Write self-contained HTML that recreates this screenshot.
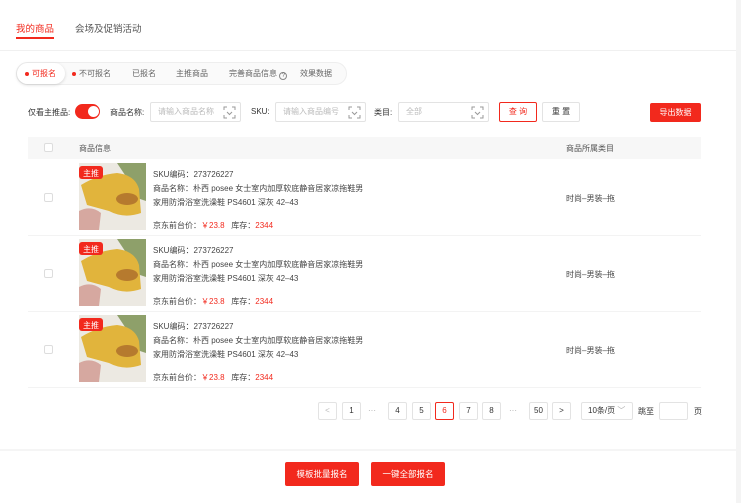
<!DOCTYPE html>
<html><head><meta charset="utf-8"><style>
*{margin:0;padding:0;box-sizing:border-box}
body{width:741px;height:503px;background:#fff;font-family:"Liberation Sans","Noto Sans CJK SC",sans-serif;font-size:8px;color:#333;position:relative;overflow:hidden}
.a{position:absolute;white-space:nowrap}
.inp{position:absolute;height:20px;border:1px solid #e3e3e3;border-radius:2px;color:#bbb;font-size:8px;line-height:18px;padding-left:7px}
.sc{position:absolute;right:4px;top:3px}
.pg{position:absolute;top:402px;width:19px;height:18px;border:1px solid #e3e3e3;border-radius:2px;text-align:center;line-height:16px;font-size:8px;color:#333}
.cb{position:absolute;width:9px;height:9px;border:1px solid #ddd;border-radius:2px;background:#fff}
.btn{position:absolute;background:#f2291d;color:#fff;border-radius:2px;text-align:center}
.red{color:#f2291d}
</style></head><body>
<div class="a" style="left:16px;top:21px;font-size:9.5px;color:#f2291d">我的商品</div>
<div style="position:absolute;left:16px;top:37px;width:38px;height:2px;background:#f2291d"></div>
<div class="a" style="left:75px;top:21px;font-size:9.5px;color:#555">会场及促销活动</div>
<div style="position:absolute;left:0;top:50px;width:736px;height:1px;background:#f0f0f0"></div>

<div style="position:absolute;left:16px;top:62px;width:331px;height:23px;border:1px solid #eee;border-radius:12px;background:#fafafa"></div>
<div style="position:absolute;left:17px;top:63px;width:48px;height:21px;border-radius:11px;background:#fff;box-shadow:0 1px 3px rgba(0,0,0,.15)"></div>
<div style="position:absolute;left:25px;top:72px;width:4px;height:4px;border-radius:50%;background:#f2291d"></div>
<div class="a red" style="left:32px;top:68px">可报名</div>
<div style="position:absolute;left:72px;top:72px;width:4px;height:4px;border-radius:50%;background:#f2291d"></div>
<div class="a" style="left:79px;top:68px;color:#666">不可报名</div>
<div class="a" style="left:132px;top:68px;color:#666">已报名</div>
<div class="a" style="left:176px;top:68px;color:#666">主推商品</div>
<div class="a" style="left:229px;top:68px;color:#666">完善商品信息 <span style="display:inline-block;width:8px;height:8px;border:1px solid #888;border-radius:50%;font-size:6px;line-height:6px;text-align:center;vertical-align:-1px">?</span></div>
<div class="a" style="left:300px;top:68px;color:#666">效果数据</div>

<div class="a" style="left:28px;top:107px;color:#333">仅看主推品:</div>
<div style="position:absolute;left:75px;top:104px;width:25px;height:15px;border-radius:8px;background:#f2291d"></div>
<div style="position:absolute;left:88px;top:106px;width:11px;height:11px;border-radius:50%;background:#fff"></div>
<div class="a" style="left:110px;top:107px">商品名称:</div>
<div class="inp" style="left:150px;top:102px;width:91px">请输入商品名称<svg class="sc" width="13" height="13" viewBox="0 0 13 13" fill="none" stroke="#999" stroke-width="1"><path d="M1 4V1H4M9 1H12V4M12 9V12H9M4 12H1V9M4 6L6.5 8.5L9 6"/></svg></div>
<div class="a" style="left:251px;top:107px">SKU:</div>
<div class="inp" style="left:275px;top:102px;width:91px">请输入商品编号<svg class="sc" width="13" height="13" viewBox="0 0 13 13" fill="none" stroke="#999" stroke-width="1"><path d="M1 4V1H4M9 1H12V4M12 9V12H9M4 12H1V9M4 6L6.5 8.5L9 6"/></svg></div>
<div class="a" style="left:374px;top:107px">类目:</div>
<div class="inp" style="left:398px;top:102px;width:91px">全部<svg class="sc" width="13" height="13" viewBox="0 0 13 13" fill="none" stroke="#999" stroke-width="1"><path d="M1 4V1H4M9 1H12V4M12 9V12H9M4 12H1V9M4 6L6.5 8.5L9 6"/></svg></div>
<div class="a" style="left:499px;top:102px;width:38px;height:20px;border:1px solid #f2291d;border-radius:2px;color:#f2291d;text-align:center;line-height:18px">查 询</div>
<div class="a" style="left:542px;top:102px;width:38px;height:20px;border:1px solid #e3e3e3;border-radius:2px;text-align:center;line-height:18px">重 置</div>
<div class="btn" style="left:650px;top:103px;width:51px;height:19px;line-height:19px">导出数据</div>

<div style="position:absolute;left:28px;top:137px;width:673px;height:22px;background:#f7f7f7"></div>
<div class="cb" style="left:44px;top:143px"></div>
<div class="a" style="left:79px;top:143px;color:#555">商品信息</div>
<div class="a" style="left:566px;top:143px;color:#555">商品所属类目</div>

<div style="position:absolute;left:28px;top:235px;width:673px;height:1px;background:#f3f3f3"></div>
<div style="position:absolute;left:28px;top:311px;width:673px;height:1px;background:#f3f3f3"></div>
<div style="position:absolute;left:28px;top:387px;width:673px;height:1px;background:#f3f3f3"></div>

<div class="pg" style="left:318px;color:#bbb">&lt;</div>
<div class="pg" style="left:342px">1</div>
<div class="a" style="left:368px;top:406px;color:#aaa">···</div>
<div class="pg" style="left:388px">4</div>
<div class="pg" style="left:412px">5</div>
<div class="pg" style="left:435px;border-color:#f2291d;color:#f2291d">6</div>
<div class="pg" style="left:459px">7</div>
<div class="pg" style="left:482px">8</div>
<div class="a" style="left:509px;top:406px;color:#aaa">···</div>
<div class="pg" style="left:529px">50</div>
<div class="pg" style="left:552px">&gt;</div>
<div class="pg" style="left:581px;width:52px;text-align:left;padding-left:6px">10条/页 <span style="color:#aaa">﹀</span></div>
<div class="a" style="left:638px;top:406px">跳至</div>
<div class="pg" style="left:659px;width:29px"></div>
<div class="a" style="left:694px;top:406px">页</div>

<div style="position:absolute;left:0;top:449px;width:736px;height:2px;background:#f5f5f5"></div>
<div class="btn" style="left:285px;top:462px;width:74px;height:24px;line-height:24px;font-size:8.5px">模板批量报名</div>
<div class="btn" style="left:371px;top:462px;width:74px;height:24px;line-height:24px;font-size:8.5px">一键全部报名</div>
<div style="position:absolute;left:736px;top:0;width:5px;height:503px;background:#f4f4f4"></div>

<div style="position:absolute;left:0;top:163px">
 <div class="cb" style="left:44px;top:30px"></div>
 <svg style="position:absolute;left:79px;top:0" width="67" height="67" viewBox="0 0 67 67"><rect width="67" height="67" fill="#ece9e2"/><path d="M38 0 L67 0 L67 38 L58 35 L50 18 Z" fill="#8ea06a"/><path d="M2 22 Q18 12 38 10 Q56 12 60 26 L62 50 Q45 56 30 48 L8 42 Z" fill="#e1b43c"/><ellipse cx="48" cy="36" rx="11" ry="6" fill="#b67a2e"/><path d="M0 48 Q12 42 22 50 L20 67 L0 67 Z" fill="#d6a8a0"/><rect x="0" y="3" width="24" height="13" rx="3" fill="#f2291d"/><text x="4" y="13" font-size="8" fill="#fff" font-family="Noto Sans CJK SC">主推</text></svg>
 <div class="a" style="left:153px;top:6px;color:#444">SKU编码：273726227</div>
 <div class="a" style="left:153px;top:20px;color:#444">商品名称：朴西 posee 女士室内加厚软底静音居家凉拖鞋男</div>
 <div class="a" style="left:153px;top:34px;color:#444">家用防滑浴室洗澡鞋 PS4601 深灰 42–43</div>
 <div class="a" style="left:153px;top:57px;color:#444">京东前台价：<span class="red">￥23.8</span>&nbsp;&nbsp;&nbsp;库存：<span class="red">2344</span></div>
 <div class="a" style="left:566px;top:30px;color:#444">时尚–男装–拖</div>
</div>
<div style="position:absolute;left:0;top:239px">
 <div class="cb" style="left:44px;top:30px"></div>
 <svg style="position:absolute;left:79px;top:0" width="67" height="67" viewBox="0 0 67 67"><rect width="67" height="67" fill="#ece9e2"/><path d="M38 0 L67 0 L67 38 L58 35 L50 18 Z" fill="#8ea06a"/><path d="M2 22 Q18 12 38 10 Q56 12 60 26 L62 50 Q45 56 30 48 L8 42 Z" fill="#e1b43c"/><ellipse cx="48" cy="36" rx="11" ry="6" fill="#b67a2e"/><path d="M0 48 Q12 42 22 50 L20 67 L0 67 Z" fill="#d6a8a0"/><rect x="0" y="3" width="24" height="13" rx="3" fill="#f2291d"/><text x="4" y="13" font-size="8" fill="#fff" font-family="Noto Sans CJK SC">主推</text></svg>
 <div class="a" style="left:153px;top:6px;color:#444">SKU编码：273726227</div>
 <div class="a" style="left:153px;top:20px;color:#444">商品名称：朴西 posee 女士室内加厚软底静音居家凉拖鞋男</div>
 <div class="a" style="left:153px;top:34px;color:#444">家用防滑浴室洗澡鞋 PS4601 深灰 42–43</div>
 <div class="a" style="left:153px;top:57px;color:#444">京东前台价：<span class="red">￥23.8</span>&nbsp;&nbsp;&nbsp;库存：<span class="red">2344</span></div>
 <div class="a" style="left:566px;top:30px;color:#444">时尚–男装–拖</div>
</div>
<div style="position:absolute;left:0;top:315px">
 <div class="cb" style="left:44px;top:30px"></div>
 <svg style="position:absolute;left:79px;top:0" width="67" height="67" viewBox="0 0 67 67"><rect width="67" height="67" fill="#ece9e2"/><path d="M38 0 L67 0 L67 38 L58 35 L50 18 Z" fill="#8ea06a"/><path d="M2 22 Q18 12 38 10 Q56 12 60 26 L62 50 Q45 56 30 48 L8 42 Z" fill="#e1b43c"/><ellipse cx="48" cy="36" rx="11" ry="6" fill="#b67a2e"/><path d="M0 48 Q12 42 22 50 L20 67 L0 67 Z" fill="#d6a8a0"/><rect x="0" y="3" width="24" height="13" rx="3" fill="#f2291d"/><text x="4" y="13" font-size="8" fill="#fff" font-family="Noto Sans CJK SC">主推</text></svg>
 <div class="a" style="left:153px;top:6px;color:#444">SKU编码：273726227</div>
 <div class="a" style="left:153px;top:20px;color:#444">商品名称：朴西 posee 女士室内加厚软底静音居家凉拖鞋男</div>
 <div class="a" style="left:153px;top:34px;color:#444">家用防滑浴室洗澡鞋 PS4601 深灰 42–43</div>
 <div class="a" style="left:153px;top:57px;color:#444">京东前台价：<span class="red">￥23.8</span>&nbsp;&nbsp;&nbsp;库存：<span class="red">2344</span></div>
 <div class="a" style="left:566px;top:30px;color:#444">时尚–男装–拖</div>
</div>
</body></html>
